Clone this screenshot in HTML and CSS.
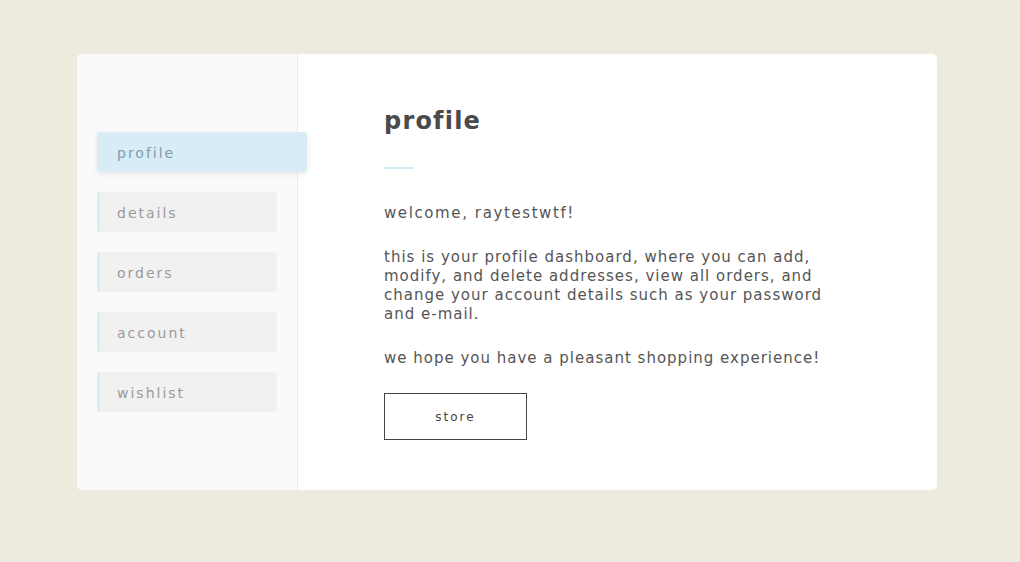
FILE: index.html
```html
<!DOCTYPE html>
<html lang="en">
<head>
<meta charset="utf-8">
<title>profile</title>
<link rel="stylesheet" href="styles.css">
</head>
<body>
<div class="card">
  <aside class="sidebar">
    <nav class="nav">
      <a class="nav-item active">profile</a>
      <a class="nav-item">details</a>
      <a class="nav-item">orders</a>
      <a class="nav-item">account</a>
      <a class="nav-item">wishlist</a>
    </nav>
  </aside>
  <main class="main">
    <h1 class="title">profile</h1>
    <div class="rule"></div>
    <p class="welcome">welcome, raytestwtf!</p>
    <p class="text">this is your profile dashboard, where you can add, modify, and delete addresses, view all orders, and change your account details such as your password and e-mail.</p>
    <p class="text">we hope you have a pleasant shopping experience!</p>
    <button class="btn">store</button>
  </main>
</div>
</body>
</html>
```

FILE: styles.css
```css
* { box-sizing: border-box; }
html, body { margin: 0; padding: 0; }
body {
  background: #edeade;
  font-family: "DejaVu Sans", "Open Sans", sans-serif;
  height: 562px;
  overflow: hidden;
}
.card {
  width: 860px;
  height: 436px;
  margin: 54px 0 0 77px;
  background: #fff;
  border-radius: 5px;
  display: flex;
}
.sidebar {
  width: 221px;
  background: #fafafa;
  border-right: 1px solid #ececec;
  border-radius: 5px 0 0 5px;
  padding: 78px 0 0 20px;
}
.nav {
  display: flex;
  flex-direction: column;
  gap: 20px;
}
.nav-item {
  display: flex;
  align-items: center;
  width: 180px;
  height: 40px;
  padding: 1px 0 0 17px;
  background: #f1f1f1;
  border-left: 3px solid #d8ecf5;
  border-radius: 3px;
  color: #9a9a9a;
  font-size: 14px;
  letter-spacing: 2px;
  position: relative;
  z-index: 1;
}
.nav-item.active {
  width: 210px;
  background: #d7ecf5;
  color: #7f9bae;
  box-shadow: 0 2px 6px rgba(0,0,0,0.08);
}
.main {
  flex: 1;
  padding: 52px 0 0 86px;
  color: #555;
}
.title {
  margin: 0;
  font-size: 24px;
  font-weight: bold;
  letter-spacing: 1.2px;
  color: #4a4a4a;
  line-height: 30px;
}
.rule {
  width: 30px;
  height: 2px;
  background: #d8ecf5;
  margin-top: 31px;
}
.welcome {
  margin: 35px 0 0;
  font-size: 15px;
  line-height: 19px;
  letter-spacing: 1.6px;
}
.text {
  margin: 25px 0 0;
  width: 450px;
  font-size: 15px;
  line-height: 19px;
  letter-spacing: 1px;
}
.btn {
  display: block;
  margin-top: 25px;
  width: 143px;
  height: 47px;
  background: #fff;
  border: 1px solid #444;
  font-family: inherit;
  font-size: 12px;
  letter-spacing: 2px;
  color: #444;
  padding: 0;
}
```
